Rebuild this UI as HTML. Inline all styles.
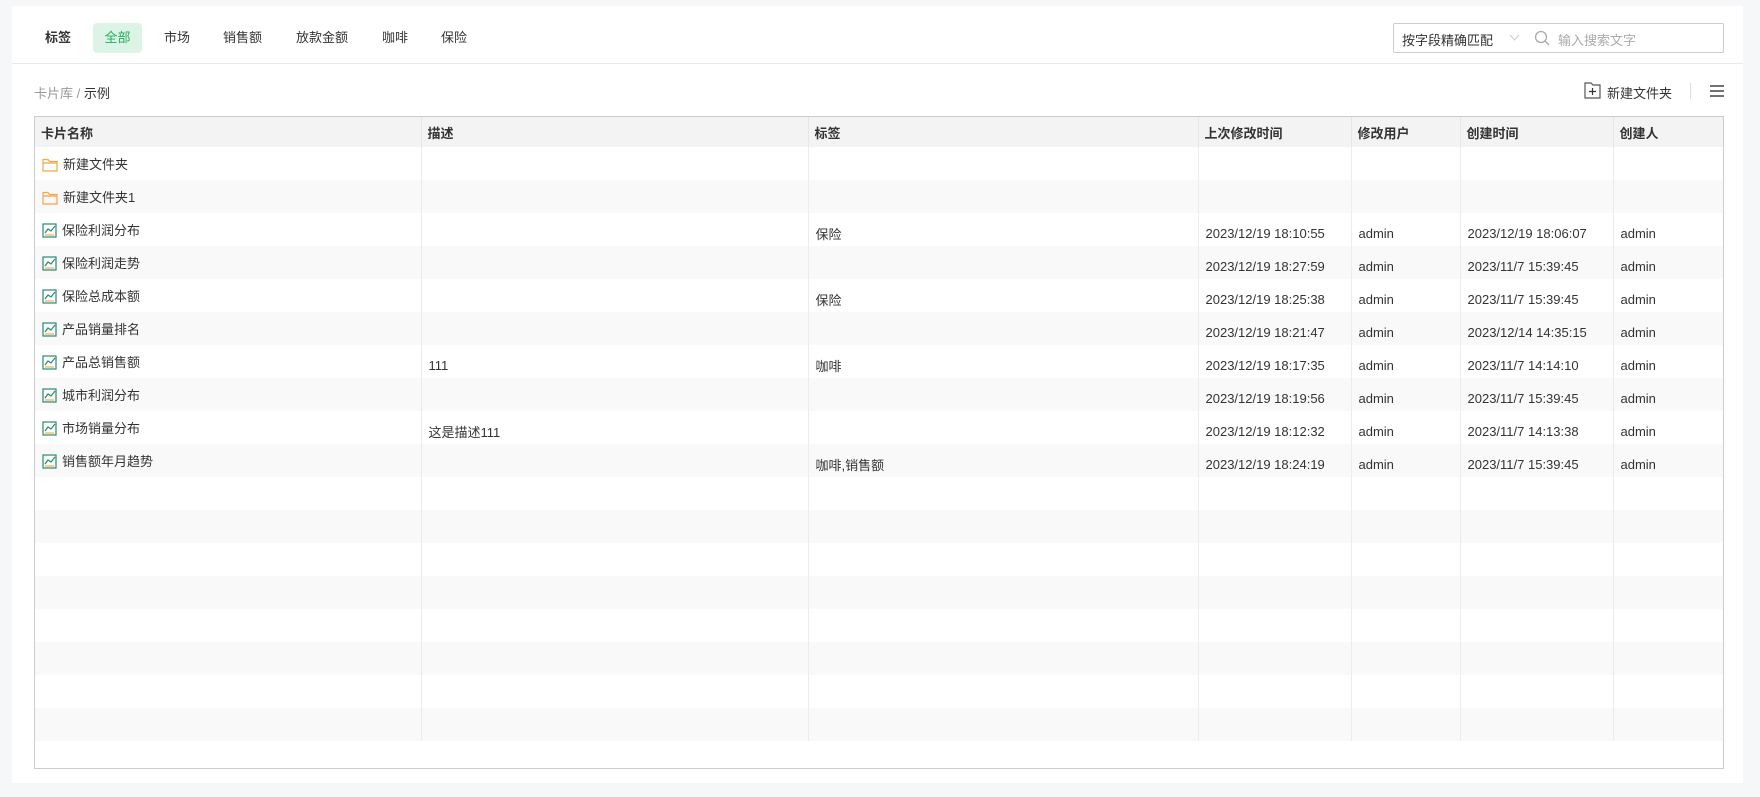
<!DOCTYPE html>
<html><head><meta charset="utf-8"><style>
*{box-sizing:border-box;margin:0;padding:0}
body{width:1760px;height:797px;background:#f6f7f9;font-family:"Liberation Sans","Noto Sans CJK SC",sans-serif;font-size:13px;color:#333;position:relative;overflow:hidden}
.card{position:absolute;left:12px;top:6px;width:1731px;height:777px;background:#fff}
.abs{position:absolute;white-space:nowrap}
.hdr{position:absolute;left:12px;top:63px;width:1731px;height:1px;background:#e6e9ee}
.tab{position:absolute;top:23px;height:30px;line-height:30px;font-size:13px;color:#333}
table{position:absolute;left:35px;top:117px;width:1688px;border-collapse:collapse;table-layout:fixed}
.tw{position:absolute;left:34px;top:116px;width:1690px;height:653px;border:1px solid #ccc;z-index:2;pointer-events:none}
th{height:30px;background:#f3f3f3;font-weight:bold;text-align:left;padding:0 6px;font-size:13px;color:#333;border-right:1px solid #e6e6e6}
td{height:33px;padding:0 7px;font-size:13px;color:#333;border-right:1px solid #ececec;vertical-align:middle;white-space:nowrap}
tr:nth-child(odd) td{background:#f9f9f9}
td.o{padding-top:8px}
th:last-child,td:last-child{border-right:none}
.ic{display:inline-block;vertical-align:-3px;margin-right:5px}
</style></head><body>
<div class="card"></div>
<div class="tab" style="left:45px;font-weight:bold">标签</div>
<div class="tab" style="left:93px;width:49px;background:#dcf3e6;color:#1fae5a;border-radius:4px;text-align:center">全部</div>
<div class="tab" style="left:164px">市场</div>
<div class="tab" style="left:223px">销售额</div>
<div class="tab" style="left:296px">放款金额</div>
<div class="tab" style="left:382px">咖啡</div>
<div class="tab" style="left:441px">保险</div>
<div class="abs" style="left:1393px;top:23px;width:331px;height:30px;border:1px solid #ccc;border-radius:2px"></div>
<div class="abs" style="left:1402px;top:30px;color:#333">按字段精确匹配</div>
<svg class="abs" style="left:1509px;top:34px" width="11" height="8"><path d="M1 1l4.5 5 4.5-5" fill="none" stroke="#ccc"/></svg>
<svg class="abs" style="left:1534px;top:30px" width="16" height="16"><circle cx="7" cy="7" r="5.5" fill="none" stroke="#aaa" stroke-width="1.3"/><path d="M11 11l4 4" stroke="#aaa" stroke-width="1.3"/></svg>
<div class="abs" style="left:1558px;top:30px;color:#aaa">输入搜索文字</div>
<div class="hdr"></div>
<div class="abs" style="left:34px;top:83px;color:#999">卡片库 / <span style="color:#333">示例</span></div>
<svg class="abs" style="left:1584px;top:81px" width="18" height="18"><path d="M1 2h6l2 2h7v13H1z" fill="none" stroke="#555" stroke-width="1.2"/><path d="M8.5 7v7M5 10.5h7" stroke="#333" stroke-width="1.2"/></svg>
<div class="abs" style="left:1607px;top:83px">新建文件夹</div>
<div class="abs" style="left:1690px;top:83px;width:1px;height:16px;background:#ddd"></div>
<svg class="abs" style="left:1710px;top:84px" width="14" height="14"><path d="M0 2h14M0 7h14M0 12h14" stroke="#444" stroke-width="1.6"/></svg>
<div class="tw"></div>
<table>
<colgroup><col style="width:386px"><col style="width:387px"><col style="width:390px"><col style="width:153px"><col style="width:109px"><col style="width:153px"><col style="width:110px"></colgroup>
<tr><th>卡片名称</th><th>描述</th><th>标签</th><th>上次修改时间</th><th>修改用户</th><th>创建时间</th><th>创建人</th></tr>
<tr><td><svg class="ic" width="16" height="14"><path d="M1 1.5h5l1.5 2H15v9.5H1z M1 5h14" fill="none" stroke="#f5a54a" stroke-width="1.2"/></svg>新建文件夹</td><td></td><td></td><td></td><td></td><td></td><td></td></tr>
<tr><td><svg class="ic" width="16" height="14"><path d="M1 1.5h5l1.5 2H15v9.5H1z M1 5h14" fill="none" stroke="#f5a54a" stroke-width="1.2"/></svg>新建文件夹1</td><td></td><td></td><td></td><td></td><td></td><td></td></tr>
<tr><td><svg class="ic" width="15" height="15"><rect x="1" y="1" width="13" height="13" fill="none" stroke="#2b8a6e" stroke-width="1.2"/><path d="M3 10l3-4 3 2 4-5" fill="none" stroke="#2b8a6e" stroke-width="1.2"/><path d="M3 12h9" stroke="#e6a23c"/></svg>保险利润分布</td><td></td><td class="o">保险</td><td class="o">2023/12/19 18:10:55</td><td class="o">admin</td><td class="o">2023/12/19 18:06:07</td><td class="o">admin</td></tr>
<tr><td><svg class="ic" width="15" height="15"><rect x="1" y="1" width="13" height="13" fill="none" stroke="#2b8a6e" stroke-width="1.2"/><path d="M3 10l3-4 3 2 4-5" fill="none" stroke="#2b8a6e" stroke-width="1.2"/><path d="M3 12h9" stroke="#e6a23c"/></svg>保险利润走势</td><td></td><td></td><td class="o">2023/12/19 18:27:59</td><td class="o">admin</td><td class="o">2023/11/7 15:39:45</td><td class="o">admin</td></tr>
<tr><td><svg class="ic" width="15" height="15"><rect x="1" y="1" width="13" height="13" fill="none" stroke="#2b8a6e" stroke-width="1.2"/><path d="M3 10l3-4 3 2 4-5" fill="none" stroke="#2b8a6e" stroke-width="1.2"/><path d="M3 12h9" stroke="#e6a23c"/></svg>保险总成本额</td><td></td><td class="o">保险</td><td class="o">2023/12/19 18:25:38</td><td class="o">admin</td><td class="o">2023/11/7 15:39:45</td><td class="o">admin</td></tr>
<tr><td><svg class="ic" width="15" height="15"><rect x="1" y="1" width="13" height="13" fill="none" stroke="#2b8a6e" stroke-width="1.2"/><path d="M3 10l3-4 3 2 4-5" fill="none" stroke="#2b8a6e" stroke-width="1.2"/><path d="M3 12h9" stroke="#e6a23c"/></svg>产品销量排名</td><td></td><td></td><td class="o">2023/12/19 18:21:47</td><td class="o">admin</td><td class="o">2023/12/14 14:35:15</td><td class="o">admin</td></tr>
<tr><td><svg class="ic" width="15" height="15"><rect x="1" y="1" width="13" height="13" fill="none" stroke="#2b8a6e" stroke-width="1.2"/><path d="M3 10l3-4 3 2 4-5" fill="none" stroke="#2b8a6e" stroke-width="1.2"/><path d="M3 12h9" stroke="#e6a23c"/></svg>产品总销售额</td><td class="o">111</td><td class="o">咖啡</td><td class="o">2023/12/19 18:17:35</td><td class="o">admin</td><td class="o">2023/11/7 14:14:10</td><td class="o">admin</td></tr>
<tr><td><svg class="ic" width="15" height="15"><rect x="1" y="1" width="13" height="13" fill="none" stroke="#2b8a6e" stroke-width="1.2"/><path d="M3 10l3-4 3 2 4-5" fill="none" stroke="#2b8a6e" stroke-width="1.2"/><path d="M3 12h9" stroke="#e6a23c"/></svg>城市利润分布</td><td></td><td></td><td class="o">2023/12/19 18:19:56</td><td class="o">admin</td><td class="o">2023/11/7 15:39:45</td><td class="o">admin</td></tr>
<tr><td><svg class="ic" width="15" height="15"><rect x="1" y="1" width="13" height="13" fill="none" stroke="#2b8a6e" stroke-width="1.2"/><path d="M3 10l3-4 3 2 4-5" fill="none" stroke="#2b8a6e" stroke-width="1.2"/><path d="M3 12h9" stroke="#e6a23c"/></svg>市场销量分布</td><td class="o">这是描述111</td><td></td><td class="o">2023/12/19 18:12:32</td><td class="o">admin</td><td class="o">2023/11/7 14:13:38</td><td class="o">admin</td></tr>
<tr><td><svg class="ic" width="15" height="15"><rect x="1" y="1" width="13" height="13" fill="none" stroke="#2b8a6e" stroke-width="1.2"/><path d="M3 10l3-4 3 2 4-5" fill="none" stroke="#2b8a6e" stroke-width="1.2"/><path d="M3 12h9" stroke="#e6a23c"/></svg>销售额年月趋势</td><td></td><td class="o">咖啡,销售额</td><td class="o">2023/12/19 18:24:19</td><td class="o">admin</td><td class="o">2023/11/7 15:39:45</td><td class="o">admin</td></tr>
<tr><td></td><td></td><td></td><td></td><td></td><td></td><td></td></tr>
<tr><td></td><td></td><td></td><td></td><td></td><td></td><td></td></tr>
<tr><td></td><td></td><td></td><td></td><td></td><td></td><td></td></tr>
<tr><td></td><td></td><td></td><td></td><td></td><td></td><td></td></tr>
<tr><td></td><td></td><td></td><td></td><td></td><td></td><td></td></tr>
<tr><td></td><td></td><td></td><td></td><td></td><td></td><td></td></tr>
<tr><td></td><td></td><td></td><td></td><td></td><td></td><td></td></tr>
<tr><td></td><td></td><td></td><td></td><td></td><td></td><td></td></tr>
</table>
</body></html>
